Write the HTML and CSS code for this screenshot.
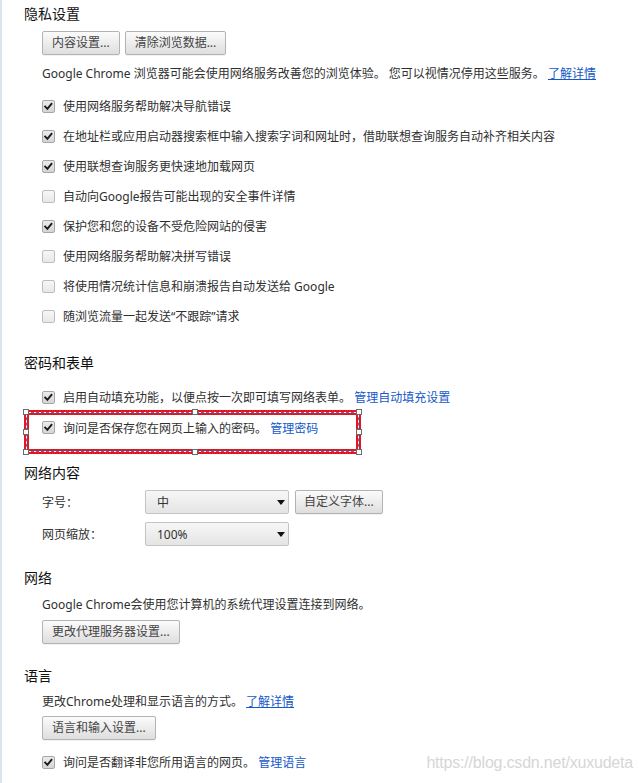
FILE: index.html
```html
<!DOCTYPE html>
<html lang="zh-CN">
<head>
<meta charset="utf-8">
<title>设置</title>
<link rel="stylesheet" href="styles.css">
</head>
<body>
<div class="page">
  <section class="sec">
    <h3 class="title">隐私设置</h3>
    <div class="body">
      <div class="btn-row"><button class="btn">内容设置...</button><button class="btn">清除浏览数据...</button></div>
      <p class="desc gap9">Google Chrome 浏览器可能会使用网络服务改善您的浏览体验。 您可以视情况停用这些服务。 <a class="link u">了解详情</a></p>
      <ul class="checks gap7">
        <li class="check"><span class="cb on"><svg viewBox="0 0 13 13"><path d="M2.6 6.6 5.2 9.2 10 3.4"/></svg></span><span>使用网络服务帮助解决导航错误</span></li>
        <li class="check"><span class="cb on"><svg viewBox="0 0 13 13"><path d="M2.6 6.6 5.2 9.2 10 3.4"/></svg></span><span>在地址栏或应用启动器搜索框中输入搜索字词和网址时，借助联想查询服务自动补齐相关内容</span></li>
        <li class="check"><span class="cb on"><svg viewBox="0 0 13 13"><path d="M2.6 6.6 5.2 9.2 10 3.4"/></svg></span><span>使用联想查询服务更快速地加载网页</span></li>
        <li class="check"><span class="cb off"></span><span>自动向Google报告可能出现的安全事件详情</span></li>
        <li class="check"><span class="cb on"><svg viewBox="0 0 13 13"><path d="M2.6 6.6 5.2 9.2 10 3.4"/></svg></span><span>保护您和您的设备不受危险网站的侵害</span></li>
        <li class="check"><span class="cb off"></span><span>使用网络服务帮助解决拼写错误</span></li>
        <li class="check"><span class="cb off"></span><span>将使用情况统计信息和崩溃报告自动发送给 Google</span></li>
        <li class="check"><span class="cb off"></span><span>随浏览流量一起发送“不跟踪”请求</span></li>
      </ul>
    </div>
  </section>

  <section class="sec">
    <h3 class="title">密码和表单</h3>
    <div class="body body9">
      <ul class="checks">
        <li class="check"><span class="cb on"><svg viewBox="0 0 13 13"><path d="M2.6 6.6 5.2 9.2 10 3.4"/></svg></span><span>启用自动填充功能，以便点按一次即可填写网络表单。 <a class="link">管理自动填充设置</a></span></li>
      </ul>
    </div>
    <div class="hl">
      <span class="hd tl"></span><span class="hd tm"></span><span class="hd tr"></span>
      <span class="hd ml"></span><span class="hd mr"></span>
      <span class="hd bl"></span><span class="hd bm"></span><span class="hd br"></span>
      <div class="check hl-row"><span class="cb on"><svg viewBox="0 0 13 13"><path d="M2.6 6.6 5.2 9.2 10 3.4"/></svg></span><span>询问是否保存您在网页上输入的密码。 <a class="link">管理密码</a></span></div>
    </div>
  </section>

  <section class="sec">
    <h3 class="title">网络内容</h3>
    <div class="body">
      <div class="field">
        <span class="label">字号：</span>
        <div class="select"><span>中</span><span class="arrow"></span></div>
        <button class="btn btn-side">自定义字体...</button>
      </div>
      <div class="field">
        <span class="label">网页缩放：</span>
        <div class="select"><span>100%</span><span class="arrow"></span></div>
      </div>
    </div>
  </section>

  <section class="sec">
    <h3 class="title">网络</h3>
    <div class="body">
      <p class="desc">Google Chrome会使用您计算机的系统代理设置连接到网络。</p>
      <div class="btn-row gap5"><button class="btn">更改代理服务器设置...</button></div>
    </div>
  </section>

  <section class="sec sec-last">
    <h3 class="title">语言</h3>
    <div class="body body6">
      <p class="desc">更改Chrome处理和显示语言的方式。 <a class="link u">了解详情</a></p>
      <div class="btn-row gap4"><button class="btn">语言和输入设置...</button></div>
      <ul class="checks gap7">
        <li class="check"><span class="cb on"><svg viewBox="0 0 13 13"><path d="M2.6 6.6 5.2 9.2 10 3.4"/></svg></span><span>询问是否翻译非您所用语言的网页。 <a class="link">管理语言</a></span></li>
      </ul>
    </div>
  </section>
</div>
<div class="watermark">https://blog.csdn.net/xuxudeta</div>
</body>
</html>
```

FILE: styles.css
```css
* { box-sizing: border-box; }
html, body { margin: 0; background: #fff; }
body {
  position: relative;
  min-height: 783px;
  border-left: 2px solid #dce4ef;
  font-family: "Noto Sans", "Noto Sans CJK SC", sans-serif;
  font-size: 12px;
  color: #303030;
  overflow: hidden;
}
.page { padding: 4px 0 0 22px; }
.sec + .sec { margin-top: 22px; }
.title {
  margin: 0;
  font-size: 14px;
  line-height: 20px;
  font-weight: normal;
  color: #111;
}
.body { padding-left: 18px; margin-top: 7px; }
.body9 { margin-top: 9px; }
.body6 { margin-top: 6px; }
.gap9 { margin-top: 9px !important; }
.gap7 { margin-top: 7px !important; }
.gap5 { margin-top: 5px !important; }
.gap4 { margin-top: 4px !important; }

.btn-row { display: flex; gap: 5px; }
.btn {
  height: 24px;
  padding: 0 9px;
  border: 1px solid #b3b3b3;
  border-radius: 2px;
  background: linear-gradient(#fbfbfb, #dedede);
  box-shadow: 0 1px 1px rgba(0,0,0,0.06);
  font: inherit;
  color: #444;
  line-height: 22px;
  white-space: nowrap;
}
.desc { margin: 0; line-height: 20px; white-space: nowrap; }
.link { color: #1558c8; text-decoration: none; }
.link.u { text-decoration: underline; }

.checks { list-style: none; margin: 0; padding: 0; }
.check {
  display: flex;
  align-items: center;
  height: 30px;
  white-space: nowrap;
}
.cb {
  flex: none;
  width: 13px;
  height: 13px;
  margin-right: 8px;
  border: 1px solid #a6a6a6;
  border-radius: 2px;
  display: flex;
  align-items: center;
  justify-content: center;
}
.cb.on { background: linear-gradient(#ececec, #d4d4d4); }
.cb.off { background: linear-gradient(#f6f6f6, #e8e8e8); border-color: #bdbdbd; }
.cb svg { width: 11px; height: 11px; display: block; }
.cb path { fill: none; stroke: #1c1c1c; stroke-width: 2.3; stroke-linecap: square; }

.hl {
  position: relative;
  width: 337px;
  margin-top: -2px;
  margin-bottom: -13px;
  border: 5px solid #e3171f;
  padding: 0 0 9px 13px;
}
.hl::before, .hl::after {
  content: "";
  position: absolute;
  top: -3px; left: -3px; right: -3px; bottom: -3px;
  pointer-events: none;
}
.hl::before { border: 1px solid #fff; }
.hl::after { border: 1px dashed #3d79da; }
.hl-row { height: 25px; }
.hd {
  position: absolute;
  width: 6px;
  height: 6px;
  border: 1px solid #6b6b6b;
  background: #fff;
  z-index: 2;
}
.tl { top: -6px; left: -6px; }
.tm { top: -6px; left: 163px; }
.tr { top: -6px; right: -6px; }
.ml { top: 14px; left: -6px; }
.mr { top: 14px; right: -6px; }
.bl { bottom: -6px; left: -6px; }
.bm { bottom: -6px; left: 163px; }
.br { bottom: -6px; right: -6px; }

.field { display: flex; align-items: center; height: 24px; }
.field + .field { margin-top: 8px; }
.label { width: 103px; }
.select {
  width: 144px;
  height: 24px;
  display: flex;
  align-items: center;
  justify-content: space-between;
  padding: 0 3px 0 11px;
  border: 1px solid #c3c3c3;
  border-radius: 2px;
  background: linear-gradient(#f7f7f7, #e4e4e4);
  color: #333;
}
.arrow {
  width: 0;
  height: 0;
  border-left: 4px solid transparent;
  border-right: 4px solid transparent;
  border-top: 5px solid #111;
}
.btn-side { margin-left: 6px; padding: 0 8px; }

.watermark {
  position: absolute;
  right: 6px;
  top: 753px;
  font-family: "Liberation Sans", sans-serif;
  font-size: 16px;
  line-height: 20px;
  color: #d6d6d6;
  letter-spacing: -0.2px;
}
```
